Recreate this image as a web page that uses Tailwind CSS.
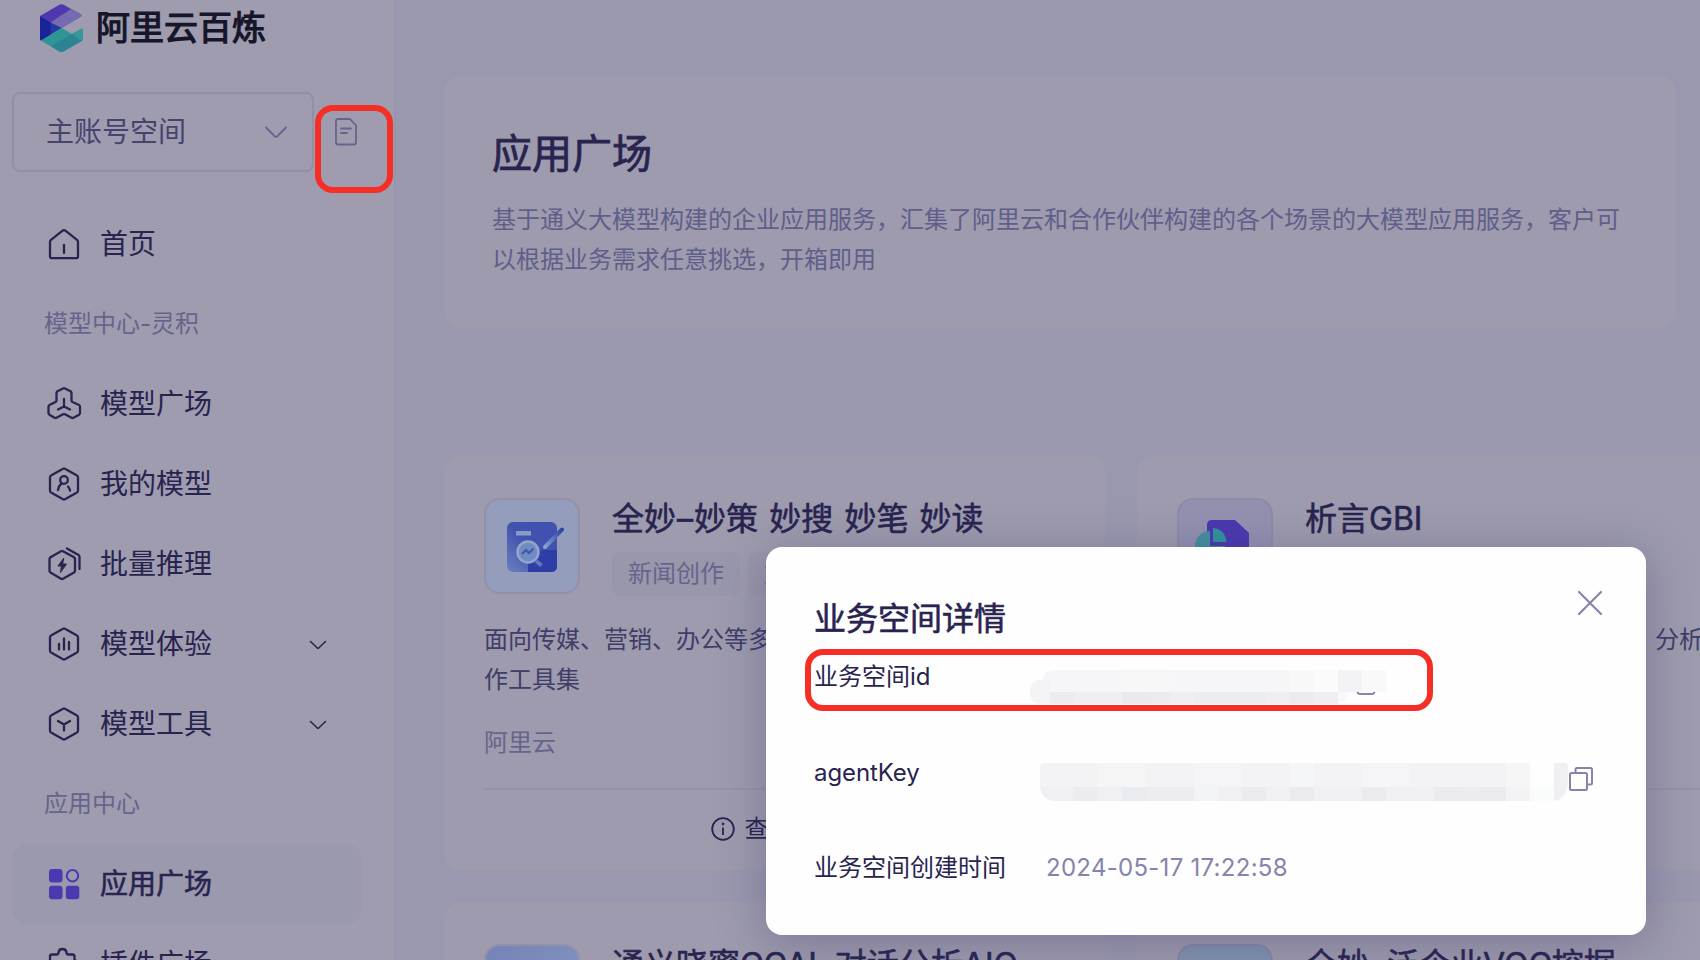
<!DOCTYPE html>
<html lang="zh-CN">
<head>
<meta charset="utf-8">
<title>阿里云百炼</title>
<script src="https://cdn.jsdelivr.net/npm/@tailwindcss/browser@4"></script>
</head>
<body class="w-[1700px] h-[960px] overflow-hidden bg-[#9a98ae] font-['Inter','Noto_Sans_CJK_SC',sans-serif] text-[#28244f]">
<div class="relative flex w-[1700px] h-[960px] overflow-hidden">

  <!-- Sidebar -->
  <aside class="w-[396px] h-[960px] shrink-0 overflow-hidden border-r-2 border-[#9694ab] bg-[#9e9cae]">
    <div class="flex items-center h-14 pl-10">
      <svg class="w-[43px] h-12 shrink-0" viewBox="0 0 43 48">
        <path d="M0 12 18.500 1.200Q21.500-.6 24.500 1.200L41 10.500Q42 11.500 41 12.500L21.500 24 0 36.500Z" fill="#4f38ab"/>
        <path d="M10.500 18.500 31 5 41 10.500Q42 11.500 41 12.500L21.500 24Z" fill="#746bb0"/>
        <path d="M0 12.500 10.500 18.500 21.500 24 2 36Q0 37 0 35Z" fill="#2338a3"/>
        <path d="M0 12.500 10.500 18.500V31L2 36Q0 37 0 35Z" fill="#172397"/>
        <path d="M21.500 24 32 30 41 25Q43 24 43 26V34Q43 36 41.500 37L24 47.200Q21.500 48.500 19 47.200L1 36.500Z" fill="#2f9495"/>
        <path d="M32 30 43 24.500V34Q43 36 41.500 37L24 47.200Q21.500 48.500 19 47.200L11 42.200Z" fill="#2c8394"/>
        <path d="M32 30 41 25Q43 24 43 26V34Q43 36 41.500 36.500Z" fill="#339a99"/>
      </svg>
      <span class="ml-[13px] text-[34px] leading-[48px] text-[#17152a] [-webkit-text-stroke:1.2px_#17152a]">阿里云百炼</span>
    </div>

    <div class="flex mt-9 pl-3">
      <div class="flex items-center justify-between w-[302px] h-20 rounded-lg border-2 border-[#918fa9] pl-8 pr-6">
        <span class="text-[28px] leading-10 text-[#46446f]">主账号空间</span>
        <svg class="w-6 h-6" viewBox="0 0 24 24" fill="none" stroke="#66648c" stroke-width="1.800" stroke-linecap="round" stroke-linejoin="round"><path d="M2 7.500 11 16.500Q12 17.300 13 16.500L22 7.500"/></svg>
      </div>
      <div class="w-[78px] h-[88px] mt-[13px] ml-px shrink-0 rounded-[18px] border-6 border-[#f52e26] pl-[14px] pt-[7px]">
        <svg class="w-[22px] h-7" viewBox="0 0 22 28" fill="none" stroke="#66648c" stroke-width="1.800" stroke-linecap="round" stroke-linejoin="round"><path d="M3 1H15L21 7.500V24.500Q21 26.500 19 26.500H3Q1 26.500 1 24.500V3Q1 1 3 1ZM6 10.500H16M6 15H12"/></svg>
      </div>
    </div>

    <nav class="mt-[11px] text-[28px] leading-10">
      <div class="flex items-center h-20 pl-12">
        <svg class="w-8 h-9 shrink-0" viewBox="0 0 32 36" fill="none" stroke="#28244f" stroke-width="2.300" stroke-linecap="round" stroke-linejoin="round"><path d="M4 32.200Q2 32.200 2 30.200V16Q2 14.600 3 13.800L14.300 4.800Q16 3.400 17.700 4.800L29 13.800Q30 14.600 30 16V30.200Q30 32.200 28 32.200ZM16 19V27"/></svg>
        <span class="ml-5">首页</span>
      </div>
      <div class="flex items-center h-20 pl-11 text-2xl text-[#66648c]">模型中心-灵积</div>
      <div class="flex items-center h-20 pl-[46px]">
        <svg class="w-9 h-9 shrink-0" viewBox="0 0 36 36" fill="none" stroke="#28244f" stroke-width="2.300" stroke-linecap="round" stroke-linejoin="round"><path d="M17 2.400Q18 1.800 19 2.400L24.500 5.200Q25.500 5.800 25.500 7V14.500Q25.500 15.500 26.500 16L33 19Q34 19.600 34 20.800V27Q34 28.200 33 28.800L27.500 31.800Q26.500 32.400 25.500 31.800L19 28.300Q18 27.700 17 28.300L10.500 31.800Q9.500 32.400 8.500 31.800L3.500 28.800Q2.500 28.200 2.500 27V20.800Q2.500 19.600 3.500 19L9.500 16Q10.500 15.500 10.500 14.500V7Q10.500 5.800 11.500 5.200ZM18 13V20.500M18 20.500 12 23.500M18 20.500 24 23.500"/></svg>
        <span class="ml-[18px]">模型广场</span>
      </div>
      <div class="flex items-center h-20 pl-12">
        <svg class="w-8 h-9 shrink-0" viewBox="0 0 32 36" fill="none" stroke="#28244f" stroke-width="2.300" stroke-linecap="round" stroke-linejoin="round"><path d="M15 2.700Q16 2.100 17 2.700L29 9.400Q30 10 30 11.200V24.800Q30 26 29 26.600L17 33.300Q16 33.900 15 33.300L3 26.600Q2 26 2 24.800V11.200Q2 10 3 9.400Z"/><circle cx="16" cy="14" r="3.800"/><path d="M13.500 17.500Q10.500 20 10 24M20 20.500Q21.500 22 22 24.500"/></svg>
        <span class="ml-5">我的模型</span>
      </div>
      <div class="flex items-center h-20 pl-12">
        <svg class="w-8 h-9 shrink-0 overflow-visible" viewBox="0 0 32 36" fill="none" stroke="#28244f" stroke-width="2.300" stroke-linecap="round" stroke-linejoin="round"><path d="M13 5.200Q14 4.600 15 5.200L26 11.300Q27 12 27 13.200V24.800Q27 26 26 26.600L15 32.800Q14 33.400 13 32.800L2.500 26.600Q1.500 26 1.500 24.800V13.200Q1.500 12 2.500 11.300ZM19 2.500 30.500 9Q31.500 9.600 31.500 10.800V23"/><path d="M15.500 12.500 10 20H13.500L12.500 26.500 18.500 18H15Z" fill="#28244f" stroke-width="1"/></svg>
        <span class="ml-5">批量推理</span>
      </div>
      <div class="flex items-center h-20 pl-12">
        <svg class="w-8 h-9 shrink-0" viewBox="0 0 32 36" fill="none" stroke="#28244f" stroke-width="2.300" stroke-linecap="round" stroke-linejoin="round"><path d="M15 2.700Q16 2.100 17 2.700L29 9.400Q30 10 30 11.200V24.800Q30 26 29 26.600L17 33.300Q16 33.900 15 33.300L3 26.600Q2 26 2 24.800V11.200Q2 10 3 9.400ZM11 18V23.500M16 12.500V23.500M21 16V23.500"/></svg>
        <span class="ml-5 w-[209px]">模型体验</span>
        <svg class="w-[18px] h-6" viewBox="0 0 18 24" fill="none" stroke="#28244f" stroke-width="1.600" stroke-linecap="round" stroke-linejoin="round"><path d="M1.500 9.500 8.300 16Q9 16.600 9.700 16L16.500 9.500"/></svg>
      </div>
      <div class="flex items-center h-20 pl-12">
        <svg class="w-8 h-9 shrink-0" viewBox="0 0 32 36" fill="none" stroke="#28244f" stroke-width="2.300" stroke-linecap="round" stroke-linejoin="round"><path d="M15 2.700Q16 2.100 17 2.700L29 9.400Q30 10 30 11.200V24.800Q30 26 29 26.600L17 33.300Q16 33.900 15 33.300L3 26.600Q2 26 2 24.800V11.200Q2 10 3 9.400ZM10 15 16 18.500 22 15M16 18.500V24.500"/></svg>
        <span class="ml-5 w-[209px]">模型工具</span>
        <svg class="w-[18px] h-6" viewBox="0 0 18 24" fill="none" stroke="#28244f" stroke-width="1.600" stroke-linecap="round" stroke-linejoin="round"><path d="M1.500 9.500 8.300 16Q9 16.600 9.700 16L16.500 9.500"/></svg>
      </div>
      <div class="flex items-center h-20 pl-11 text-2xl text-[#66648c]">应用中心</div>
      <div class="flex items-center h-20 w-[350px] ml-3 pl-9 rounded-2xl bg-[#9b99ae]">
        <svg class="w-8 h-8 shrink-0" viewBox="0 0 32 32" fill="#4a39b0"><rect x="1" y="1" width="13.500" height="13.500" rx="3"/><rect x="1" y="17.800" width="13.500" height="13.500" rx="3"/><rect x="17.800" y="17.800" width="13.500" height="13.500" rx="3"/><circle cx="24.500" cy="7.800" r="5.700" fill="none" stroke="#4a39b0" stroke-width="2"/></svg>
        <span class="ml-5 [-webkit-text-stroke:0.6px_#28244f]">应用广场</span>
      </div>
      <div class="flex items-center h-20 pl-12">
        <svg class="w-8 h-9 shrink-0" viewBox="0 0 32 36" fill="none" stroke="#28244f" stroke-width="2.300" stroke-linecap="round" stroke-linejoin="round"><path d="M2 16V10.500Q2 8.500 4 8.500H8.500Q10.500 8.500 10.500 6.500 11 3 14.500 3T18.500 6.500Q18.500 8.500 20.500 8.500H24.500Q26.500 8.500 26.500 10.500V14Q30 15 30 18.500T26.500 23V31H2Z"/></svg>
        <span class="ml-5">插件广场</span>
      </div>
    </nav>
  </aside>

  <!-- Main content -->
  <main class="flex flex-col w-[1304px] h-[960px] shrink-0 overflow-hidden pl-12 pt-[76px]">
    <section class="w-[1232px] h-[252px] shrink-0 rounded-2xl bg-[#9d9bad] pl-12 pt-[50px]">
      <h1 class="text-[40px] leading-[56px] [-webkit-text-stroke:0.8px_#28244f]">应用广场</h1>
      <p class="mt-[18px] w-[1132px] text-2xl leading-10 text-[#605e8b]">基于通义大模型构建的企业应用服务，汇集了阿里云和合作伙伴构建的各个场景的大模型应用服务，客户可以根据业务需求任意挑选，开箱即用</p>
    </section>

    <section class="grid grid-cols-[661px_661px] gap-8 mt-32 shrink-0">
      <article class="h-[414px] rounded-2xl bg-[#9d9bad] px-10 pt-[42px]">
        <div class="flex gap-8 h-24">
          <svg class="w-24 h-24 shrink-0" viewBox="0 0 96 96">
            <defs>
              <linearGradient id="a" x1="0" y1="1" x2="1" y2="0"><stop offset="0" stop-color="#6b80bd"/><stop offset=".5" stop-color="#4052ae"/><stop offset="1" stop-color="#4250b0"/></linearGradient>
              <linearGradient id="p" x1="1" y1="0" x2="0" y2="1"><stop offset="0" stop-color="#3140a5"/><stop offset="1" stop-color="#81a5cf"/></linearGradient>
            </defs>
            <rect x="1" y="1" width="94" height="94" rx="15" fill="#959dbd" stroke="#9391aa" stroke-width="2"/>
            <rect x="23" y="24" width="50" height="50" rx="6" fill="url(#a)"/>
            <path d="M44 52H73V68Q73 74 67 74H44Z" fill="#2f3ea6"/>
            <rect x="32" y="33" width="15" height="4.500" fill="#8a9ac8"/>
            <circle cx="44" cy="54" r="10.500" fill="#6f8dc3" stroke="#94a4cc" stroke-width="2.500"/>
            <path d="M38 56 42 52 45 55 49.500 50.500" fill="none" stroke="#3c55ad" stroke-width="2"/>
            <path d="M52 63 57.500 67.500" stroke="#6179bd" stroke-width="4"/>
            <path d="M61 49 78 31.500" stroke="url(#p)" stroke-width="4" stroke-linecap="round"/>
          </svg>
          <div class="w-[560px]">
            <h2 class="text-[32px] leading-[42px] whitespace-nowrap [word-spacing:2.2px] [-webkit-text-stroke:0.6px_#28244f]">全妙<span class="px-px">–</span>妙策 妙搜 妙笔 妙读</h2>
            <div class="flex gap-2 mt-3 text-2xl leading-[44px] text-[#66648c]">
              <span class="h-11 rounded-lg bg-[#9997ab] px-4">新闻创作</span>
              <span class="h-11 rounded-lg bg-[#9997ab] px-4">文案创作</span>
            </div>
          </div>
        </div>
        <p class="mt-[26px] w-[581px] h-20 text-2xl leading-10 text-[#403d69]">面向传媒、营销、办公等多场景的智能创<br>作工具集</p>
        <div class="mt-[23px] text-2xl leading-10 text-[#66648c]">阿里云</div>
        <div class="flex items-center justify-center h-20 mt-[25px] border-t-2 border-[#9593a7] pl-0.5 gap-[10px] text-2xl">
          <svg class="w-6 h-6" viewBox="0 0 24 24" fill="none" stroke="#28244f" stroke-width="1.800"><circle cx="12" cy="12" r="10.800"/><path d="M12 10.500V18"/><circle cx="12" cy="7" r=".5"/></svg>
          <span>查看详情</span>
        </div>
      </article>

      <article class="h-[414px] rounded-2xl bg-[#9d9bad] px-10 pt-[42px]">
        <div class="flex gap-8">
          <svg class="w-24 h-24 shrink-0" viewBox="0 0 96 96">
            <rect x="1" y="1" width="94" height="94" rx="15" fill="#9391b0" stroke="#8a88a5" stroke-width="1.500"/>
            <path d="M35 22H58L72 35V68Q72 74 66 74H36Q30 74 30 68V27Q30 22 35 22Z" fill="#4a39ae"/>
            <path d="M33 33V48H48A15 15 0 1 1 33 33Z" fill="#43909e"/>
            <path d="M36 30Q48 31 49.500 44H36Z" fill="#2f949c"/>
          </svg>
          <h2 class="text-[32px] leading-[42px] whitespace-nowrap [-webkit-text-stroke:0.6px_#28244f]">析言GBI</h2>
        </div>
        <div class="mt-[26px] w-[581px] h-20 text-2xl leading-10 text-[#403d69] whitespace-nowrap"><span class="pl-[478px]">分析</span></div>
        <div class="mt-[88px] border-t-2 border-[#9593a7]"></div>
      </article>

      <article class="h-[414px] rounded-2xl bg-[#9d9bad] px-10 pt-[42px]">
        <div class="flex gap-8">
          <div class="w-24 h-24 shrink-0 rounded-2xl border-2 border-[#9391aa] bg-linear-to-br from-[#7583b6] to-[#8698c4]"></div>
          <h2 class="text-[32px] leading-[42px] whitespace-nowrap [-webkit-text-stroke:0.6px_#28244f]">通义晓蜜CCAI<span class="px-px">–</span>对话分析AIO</h2>
        </div>
      </article>

      <article class="h-[414px] rounded-2xl bg-[#9d9bad] px-10 pt-[42px]">
        <div class="flex gap-8">
          <div class="w-24 h-24 shrink-0 rounded-2xl border-2 border-[#8a88a5] bg-[#8093ad]"></div>
          <h2 class="text-[32px] leading-[42px] whitespace-nowrap [-webkit-text-stroke:0.6px_#28244f]">全妙<span class="px-px">–</span>泛企业VOC挖掘</h2>
        </div>
      </article>
    </section>
  </main>

  <!-- Workspace details dialog -->
  <div class="absolute left-[766px] top-[547px] w-[880px] h-[388px] rounded-2xl bg-[#fefefe] pl-12 pt-12 shadow-[0_8px_48px_rgba(60,56,110,0.36)]">
    <div class="flex justify-between">
      <h3 class="text-[32px] leading-[48px] h-12 [-webkit-text-stroke:0.6px_#28244f]">业务空间详情</h3>
      <svg class="w-[26px] h-[26px] mr-[43px] -mt-[5px]" viewBox="0 0 26 26" stroke="#8684ab" stroke-width="2.200" stroke-linecap="round"><path d="M2 2 24 24M24 2 2 24"/></svg>
    </div>
    <div class="-ml-[9px] mt-[6px] flex w-[628px] h-[62px] rounded-[18px] border-6 border-[#f52e26]">
      <span class="w-[219px] pl-[3px] pt-[2px] text-2xl leading-10 whitespace-nowrap">业务空间id</span>
      <svg class="w-[360px] h-[50px] shrink-0" viewBox="0 0 360 50">
        <defs><clipPath id="m1"><path d="M24 15H356V37H318Q316 49 308 49H12Q0 49 0 37T12 25Q14 15 24 15Z"/></clipPath></defs>
        <g clip-path="url(#m1)">
          <rect x="0" y="15" width="284" height="22" fill="#f6f6f8"/>
          <rect x="92" y="15" width="48" height="22" fill="#f7f7f8"/>
          <rect x="260" y="15" width="24" height="22" fill="#f8f8f9"/>
          <rect x="284" y="15" width="24" height="22" fill="#fbfbfb"/>
          <rect x="308" y="15" width="24" height="22" fill="#f3f3f6"/>
          <rect x="332" y="15" width="24" height="22" fill="#f9f9f9"/>
          <rect x="0" y="25" width="20" height="24" fill="#f4f4f6"/>
          <rect x="20" y="37" width="288" height="12" fill="#efeff2"/>
          <rect x="20" y="37" width="24" height="12" fill="#ececf0"/>
          <rect x="92" y="37" width="24" height="12" fill="#e9eaee"/>
          <rect x="116" y="37" width="24" height="12" fill="#ebebef"/>
          <rect x="164" y="37" width="72" height="12" fill="#ecedf1"/>
          <rect x="260" y="37" width="24" height="12" fill="#ebeaee"/>
          <rect x="308" y="37" width="10" height="12" fill="#f8f8fa"/>
        </g>
        <path d="M327.500 37Q328 39 330 39H342Q344 39 344.500 37" fill="none" stroke="#8684ab" stroke-width="2"/>
      </svg>
    </div>
    <div class="flex items-center h-12 mt-[38px] text-2xl">
      <span class="w-[226px] tracking-[-0.1px]">agentKey</span>
      <svg class="w-[528px] h-[38px] mt-[18px]" viewBox="0 0 528 38">
        <defs><clipPath id="m2"><path d="M4 0H525Q528 0 528 4V20Q526 36 514 38H16Q0 38 0 20V4Q0 0 4 0Z"/></clipPath></defs>
        <g clip-path="url(#m2)">
          <rect width="490" height="24" fill="#f3f3f6"/>
          <rect x="58" width="48" height="24" fill="#f5f5f6"/>
          <rect x="154" width="48" height="24" fill="#f5f5f7"/>
          <rect x="250" width="24" height="24" fill="#f5f6f8"/>
          <rect x="322" width="48" height="24" fill="#f5f5f7"/>
          <rect x="466" width="24" height="24" fill="#f6f6f7"/>
          <rect y="24" width="490" height="14" fill="#f0f0f3"/>
          <rect x="34" y="24" width="24" height="14" fill="#ecebf0"/>
          <rect x="82" y="24" width="24" height="14" fill="#eaebf0"/>
          <rect x="106" y="24" width="48" height="14" fill="#ededf0"/>
          <rect x="154" y="24" width="24" height="14" fill="#f3f4f5"/>
          <rect x="202" y="24" width="24" height="14" fill="#ebeaef"/>
          <rect x="250" y="24" width="24" height="14" fill="#ebeaef"/>
          <rect x="322" y="24" width="24" height="14" fill="#ebeaef"/>
          <rect x="394" y="24" width="24" height="14" fill="#ebeaef"/>
          <rect x="418" y="24" width="24" height="14" fill="#ececf0"/>
          <rect x="442" y="24" width="24" height="14" fill="#ebeaef"/>
          <rect x="466" y="24" width="24" height="14" fill="#f3f3f5"/>
          <rect x="490" y="24" width="24" height="14" fill="#fafcfb"/>
          <rect x="514" width="14" height="38" fill="#f0f0f4"/>
        </g>
      </svg>
      <svg class="w-6 h-6 mt-3 ml-px" viewBox="0 0 24 24" fill="none" stroke="#8684ab" stroke-width="2" stroke-linejoin="round"><rect x="1" y="6" width="17" height="17" rx="1.500"/><path d="M6.500 6V2.500Q6.500 1 8 1H21.500Q23 1 23 2.500V16Q23 17.500 21.500 17.500H18"/></svg>
    </div>
    <div class="flex items-center h-12 mt-[47px] text-2xl">
      <span class="w-[232px]">业务空间创建时间</span>
      <span class="tracking-[0.28px] text-[#8684ab]">2024-05-17 17:22:58</span>
    </div>
  </div>
</div>
</body>
</html>
